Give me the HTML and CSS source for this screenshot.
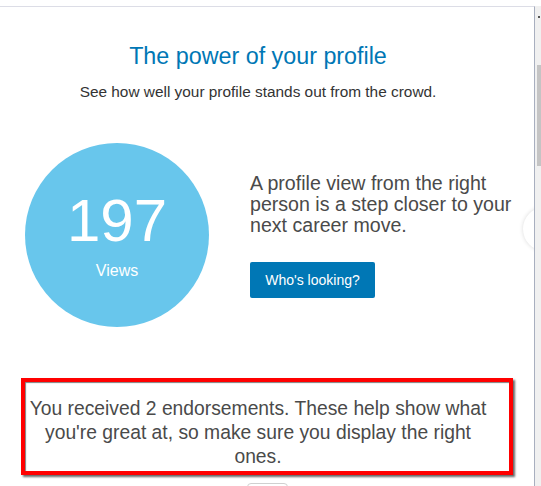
FILE: index.html
```html
<!DOCTYPE html>
<html lang="en">
<head>
<meta charset="utf-8">
<title>The power of your profile</title>
<link rel="stylesheet" href="styles.css">
</head>
<body>
<div class="window">
  <div class="panel">
    <header class="intro">
      <h1 class="title">The power of your profile</h1>
      <p class="subtitle">See how well your profile stands out from the crowd.</p>
    </header>
    <section class="views">
      <div class="circle">
        <span class="count">197</span>
        <span class="label">Views</span>
      </div>
      <div class="pitch">
        <p class="pitch-text">A profile view from the right person is a step closer to your next career move.</p>
        <button class="cta" type="button">Who's looking?</button>
      </div>
    </section>
    <section class="endorse">
      <p class="endorse-text">You received 2 endorsements. These help show what you're great at, so make sure you display the right ones.</p>
    </section>
    <div class="peek-btn"></div>
    <span class="carousel-next"></span>
  </div>
  <div class="scrollbar">
    <span class="arrow"></span>
    <span class="thumb"></span>
  </div>
</div>
</body>
</html>
```

FILE: styles.css
```css
html, body {
  margin: 0;
  height: 100%;
  overflow: hidden;
  background: #fff;
}
body {
  font-family: "Liberation Sans", Arial, sans-serif;
  color: #4a4a4a;
}
.window {
  display: flex;
  height: 486px;
  padding-top: 6px;
  box-sizing: border-box;
}
.panel {
  width: 534px;
  flex: none;
  border-top: 1px solid #dcdde6;
  border-right: 1px solid #a8afbf;
  position: relative;
  overflow: hidden;
  display: flex;
  flex-direction: column;
}
.intro {
  width: 516px;
  text-align: center;
}
.title {
  margin: 35px 0 0;
  font-size: 23.3px;
  line-height: 28px;
  font-weight: normal;
  color: #0077b5;
}
.subtitle {
  margin: 12px 0 0;
  font-size: 15.4px;
  line-height: 20px;
  color: #333;
}
.views {
  display: flex;
  align-items: center;
  gap: 41px;
  margin-top: 41px;
  padding-left: 25px;
}
.circle {
  width: 184px;
  height: 184px;
  flex: none;
  border-radius: 50%;
  background: #68c6ec;
  color: #fff;
  display: flex;
  flex-direction: column;
  align-items: center;
  padding-top: 48px;
  box-sizing: border-box;
}
.count {
  font-size: 60px;
  line-height: 60px;
}
.label {
  margin-top: 11px;
  font-size: 16px;
  line-height: 18px;
}
.pitch {
  width: 275px;
  display: flex;
  flex-direction: column;
  align-items: flex-start;
}
.pitch-text {
  margin: 0;
  font-size: 19.6px;
  line-height: 21px;
  color: #4a4a4a;
}
.cta {
  margin-top: 26px;
  width: 125px;
  height: 36px;
  padding: 0;
  border: none;
  border-radius: 2px;
  background: #0077b5;
  color: #fff;
  font-family: "Liberation Sans", Arial, sans-serif;
  font-size: 14px;
}
.endorse {
  position: relative;
  width: 470px;
  margin: 70px 0 0 23px;
}
.endorse-text {
  margin: 0;
  text-align: center;
  font-size: 19.3px;
  line-height: 24px;
  color: #4a4a4a;
}
.endorse::before {
  content: "";
  position: absolute;
  left: -2px;
  top: -19px;
  width: 492px;
  height: 97px;
  box-sizing: border-box;
  border: 4px solid #ff0000;
  box-shadow: 2px 2px 2px rgba(0, 0, 0, 0.6), inset 1px 1px 1px rgba(0, 0, 0, 0.5);
}
.peek-btn {
  align-self: center;
  margin-top: 14px;
  width: 41px;
  height: 24px;
  flex: none;
  box-sizing: border-box;
  border: 1px solid #d0d0d0;
  border-radius: 4px;
  background: #fff;
}
.carousel-next {
  position: absolute;
  left: 523px;
  top: 200px;
  width: 44px;
  height: 44px;
  border-radius: 50%;
  background: #fff;
  box-shadow: 0 0 4px rgba(0, 0, 0, 0.15);
}
.scrollbar {
  width: 6px;
  flex: none;
  background: #f0f0f0;
  display: flex;
  flex-direction: column;
  align-items: flex-end;
}
.arrow {
  margin-top: 10px;
  width: 2px;
  height: 2px;
  background: #555;
  margin-right: 1px;
}
.thumb {
  margin-top: 47px;
  width: 4px;
  height: 101px;
  background: #c4c4c4;
}
```
